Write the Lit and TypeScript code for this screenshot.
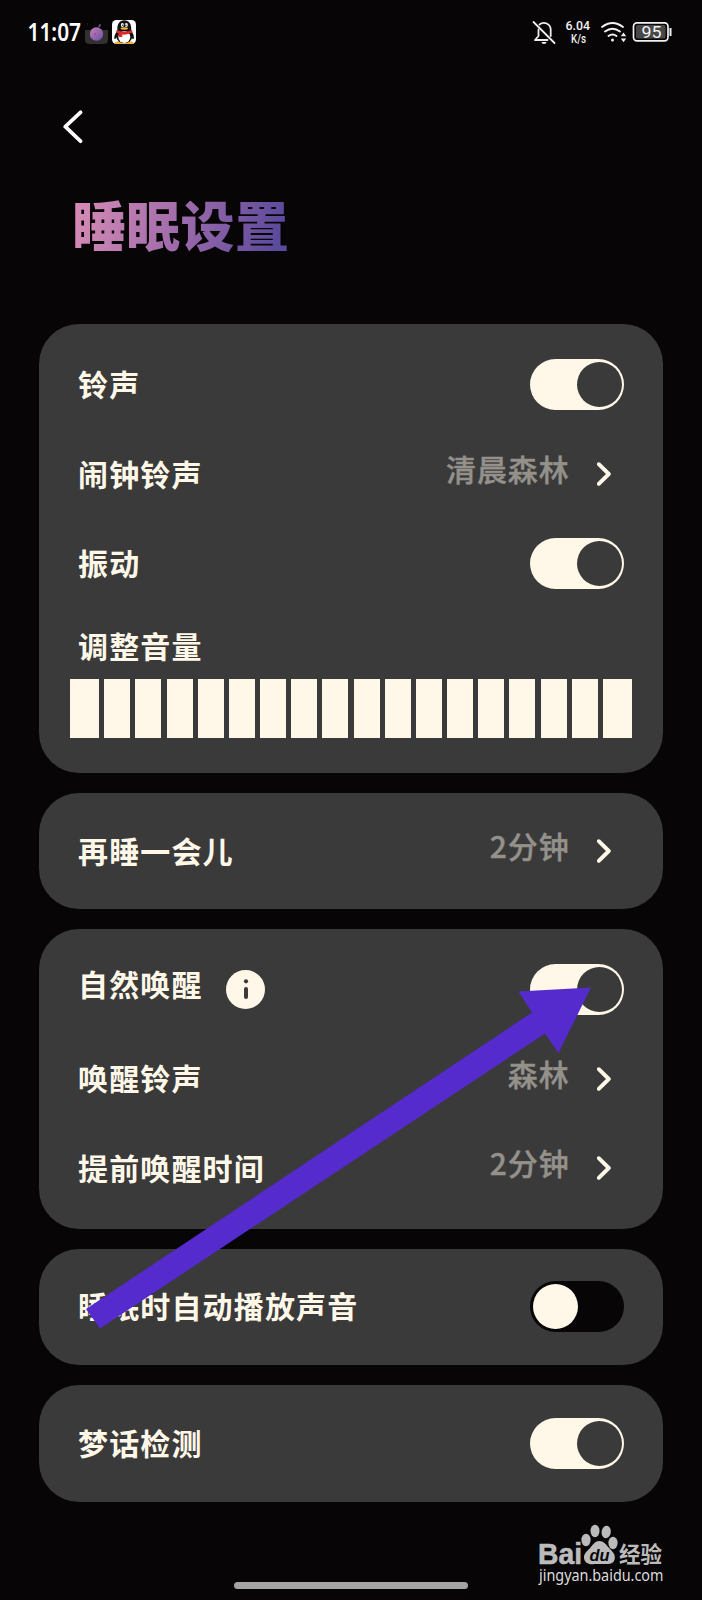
import { LitElement, html, css, nothing } from "lit";
import { customElement, property } from "lit/decorators.js";

@customElement("toggle-switch")
class ToggleSwitch extends LitElement {
  @property({ type: Boolean, reflect: true }) on = false;
  static styles = css`
    :host {
      display: flex;
      box-sizing: border-box;
      width: 94px;
      height: 51px;
      padding: 3px 2.5px;
      border-radius: 25.5px;
      background: #070506;
      justify-content: flex-start;
    }
    :host([on]) {
      background: #fff8e9;
      justify-content: flex-end;
    }
    .knob {
      width: 45px;
      height: 45px;
      border-radius: 50%;
      background: #fff8e9;
    }
    :host([on]) .knob {
      background: #3a3a3a;
    }
  `;
  render() {
    return html`<div class="knob"></div>`;
  }
}

@customElement("setting-row")
class SettingRow extends LitElement {
  @property() label = "";
  @property() value = "";
  @property() toggle = "";
  @property({ type: Boolean }) info = false;
  static styles = css`
    :host {
      display: flex;
      align-items: center;
      height: 89.5px;
      padding: 0 39px;
    }
    .label {
      font-weight: 700;
      color: #fff8e9;
      margin-top: -3px;
      letter-spacing: 1.15px;
    }
    .label.raised {
      margin-top: -13px;
    }
    .info {
      display: block;
      margin-left: 23.5px;
    }
    .end {
      margin-left: auto;
      display: flex;
      align-items: center;
    }
    .value {
      font-weight: 500;
      color: #94918b;
      margin: -12.5px 27.5px 0 0;
      -webkit-text-stroke: 0.4px #94918b;
    }
    .chevron {
      display: block;
      margin-right: 13px;
    }
  `;
  render() {
    return html`
      <span class="label ${this.info ? "raised" : ""}">${this.label}</span>
      ${this.info
        ? html`<svg class="info" width="39" height="39" viewBox="0 0 39 39">
            <circle cx="19.5" cy="19.5" r="19.5" fill="#fff8e9" />
            <circle cx="20" cy="11.3" r="2.1" fill="#3a3a3a" />
            <path d="M20 19v8" stroke="#3a3a3a" stroke-width="4" stroke-linecap="round" />
          </svg>`
        : nothing}
      <div class="end">
        ${this.toggle
          ? html`<toggle-switch ?on=${this.toggle === "on"}></toggle-switch>`
          : html`<span class="value">${this.value}</span>
              <svg class="chevron" width="14" height="24" viewBox="0 0 14 24" fill="none">
                <path d="M1.8 2.2L11.8 12L1.8 21.8" stroke="#fff8e9" stroke-width="3.9" stroke-linecap="round" stroke-linejoin="round" />
              </svg>`}
      </div>
    `;
  }
}

@customElement("status-bar")
class StatusBar extends LitElement {
  static styles = css`
    :host {
      display: block;
      height: 64px;
      letter-spacing: 0;
    }
    .bar {
      display: block;
    }
    .cond {
      font-family: "Noto Sans", sans-serif;
      font-weight: 600;
    }
    .tiny {
      font-family: Roboto, sans-serif;
      font-weight: 500;
    }
    .level {
      font-family: Roboto, sans-serif;
      font-weight: 400;
    }
  `;
  render() {
    return html`<svg class="bar" width="702" height="64" viewBox="0 0 702 64" fill="none">
      <text class="cond" x="27.5" y="41" font-size="25" fill="#fff" textLength="53.5" lengthAdjust="spacingAndGlyphs">11:07</text>
      <defs>
        <linearGradient id="plum" x1="0" y1="0" x2="1" y2="1">
          <stop offset="0" stop-color="#c481bb" />
          <stop offset="1" stop-color="#6e4fa0" />
        </linearGradient>
        <clipPath id="tile"><rect x="112" y="20" width="24" height="24" rx="4.5" /></clipPath>
      </defs>
      <path d="M85 30H108V39.500Q108 44 103.500 44H89.500Q85 44 85 39.500Z" fill="#323132" />
      <circle cx="96.500" cy="34" r="6.700" fill="url(#plum)" />
      <circle cx="95" cy="34" r=".7" fill="#74306f" />
      <path d="M98 27.500l1-3 2-.5-1 3z" fill="#5f5b9c" />
      <circle cx="87.500" cy="24" r=".7" fill="#38263e" />
      <circle cx="96" cy="22" r=".6" fill="#38263e" />
      <g clip-path="url(#tile)">
        <rect x="112" y="20" width="24" height="24" fill="#fff" />
        <ellipse cx="119.300" cy="43" rx="4.500" ry="1.800" fill="#efb336" />
        <ellipse cx="129.200" cy="43" rx="4.500" ry="1.800" fill="#efb336" />
        <path d="M118 30C115.500 32.500 113.700 37 114.500 39C115.500 39.300 116.300 38 117 37L131 37C132 38.500 133 39.300 133.700 38.700C134.500 36 132.500 32 130.500 30Z" fill="#111" />
        <ellipse cx="124.300" cy="36" rx="8" ry="7.300" fill="#111" />
        <ellipse cx="124.300" cy="37" rx="6" ry="6" fill="#fff" />
        <path d="M117.300 30.500C117 24 119.500 20.300 124.300 20.300S131.500 24 131.200 30.500Z" fill="#111" />
        <ellipse cx="122.400" cy="25" rx="1.500" ry="2.100" fill="#fff" />
        <ellipse cx="126.300" cy="25" rx="1.500" ry="2.100" fill="#fff" />
        <circle cx="122.800" cy="25.200" r=".7" fill="#111" />
        <circle cx="125.900" cy="25.200" r=".7" fill="#111" />
        <ellipse cx="124.300" cy="28.500" rx="3.700" ry="1.200" fill="#efb336" />
        <path d="M116.500 30Q124 33 132 30L132.500 32.500Q127 35.200 122.300 34.500V37H119V33.800L116.300 32.500Z" fill="#df2929" />
      </g>
      <g stroke="#eee" stroke-width="1.800" stroke-linecap="round" stroke-linejoin="round">
        <path d="M533.500 22L554.500 43" />
        <path d="M538.500 29.500V36L535 40H547.500M539.500 24.500C544 20.700 550.500 24 550.700 29.500V36" />
      </g>
      <path d="M541.500 42h5a2.500 2 0 0 1-5 0z" fill="#eee" />
      <text class="tiny" x="565.500" y="30" font-size="13" fill="#f2f2f2" textLength="24.500" lengthAdjust="spacingAndGlyphs">6.04</text>
      <text class="tiny" x="571" y="43.300" font-size="12" fill="#f2f2f2" textLength="15" lengthAdjust="spacingAndGlyphs">K/s</text>
      <g stroke="#f2f2f2" stroke-width="1.900" stroke-linecap="round">
        <path d="M602 27Q612.500 19 623 27" />
        <path d="M605 31.500Q612.500 26 620 31.500" />
        <path d="M608.500 36Q612.500 33 616.500 36" />
      </g>
      <circle cx="612.500" cy="40" r="1.500" fill="#f2f2f2" />
      <path d="M620.800 36.300L623.500 32.500L626.200 36.300ZM620.800 38.500L623.500 42.300L626.200 38.500Z" fill="#f2f2f2" />
      <rect x="633.500" y="22.800" width="34.500" height="18" rx="3.500" stroke="#f2f2f2" stroke-width="1.700" />
      <rect x="636" y="25" width="29.500" height="13.600" rx="1.500" fill="#484848" />
      <path d="M669.500 28h2v8h-2z" fill="#f2f2f2" />
      <text class="level" x="641.500" y="38" font-size="17" fill="#f2f2f2" textLength="20" lengthAdjust="spacingAndGlyphs">95</text>
    </svg>`;
  }
}

@customElement("app-root")
class AppRoot extends LitElement {
  static styles = css`
    :host {
      display: block;
      position: relative;
      box-sizing: border-box;
      width: 702px;
      height: 1600px;
      overflow: hidden;
      background: #070506;
      font-family: "Noto Sans CJK SC", sans-serif;
      font-size: 30px;
      letter-spacing: 0.85px;
      line-height: 40px;
      white-space: nowrap;
    }
    .screen {
      display: flex;
      flex-direction: column;
      height: 1600px;
    }
    .back {
      display: block;
      margin: 46px 0 0 62px;
    }
    .title {
      width: fit-content;
      margin: 40px 0 0 72px;
      font-size: 54px;
      line-height: 80px;
      font-weight: 900;
      letter-spacing: 0.3px;
      color: transparent;
      background: linear-gradient(105deg, #d78bb5 4%, #a56fac 45%, #5c4a9c 92%);
      -webkit-background-clip: text;
      background-clip: text;
    }
    .cards {
      display: flex;
      flex-direction: column;
      gap: 19.6px;
      margin: 60.200px 39px 0;
    }
    .card {
      box-sizing: border-box;
      border-radius: 40px;
      background: #3a3a3a;
      padding: 15.7px 0;
    }
    .single {
      padding: 13.7px 0;
    }
    .main {
      height: 448.800px;
    }
    .volume {
      padding: 16.800px 39px 0;
      font-weight: 700;
      letter-spacing: 1.15px;
      color: #fff8e9;
    }
    .meter {
      display: flex;
      justify-content: space-between;
      height: 59px;
      margin: 13.800px 31px 0;
    }
    .bar {
      width: 26px;
      background: #fff8e9;
    }
    .bar:first-child,
    .bar:last-child {
      width: 29px;
    }
    .home {
      width: 234px;
      height: 6.500px;
      border-radius: 3.500px;
      margin: auto auto 11.500px;
      background: #a5a4a5;
    }
    .overlay {
      position: absolute;
      left: 0;
      top: 0;
      letter-spacing: 0;
    }
    .bai {
      font-family: "Liberation Sans", sans-serif;
      font-weight: 700;
    }
    .cn {
      font-family: "Noto Sans CJK SC", sans-serif;
      font-weight: 700;
    }
    .url {
      font-family: "Noto Sans", sans-serif;
    }
  `;
  render() {
    return html`
      <div class="screen">
        <status-bar></status-bar>
        <svg class="back" width="22" height="34" viewBox="0 0 22 34" fill="none">
          <path d="M18.500 2.300L3.300 16.700L18.500 31.200" stroke="#fff" stroke-width="3.700" stroke-linecap="round" stroke-linejoin="round" />
        </svg>
        <div class="title">睡眠设置</div>
        <div class="cards">
          <div class="card main">
            <setting-row label="铃声" toggle="on"></setting-row>
            <setting-row label="闹钟铃声" value="清晨森林"></setting-row>
            <setting-row label="振动" toggle="on"></setting-row>
            <div class="volume">调整音量</div>
            <div class="meter">${Array.from({ length: 18 }, () => html`<div class="bar"></div>`)}</div>
          </div>
          <div class="card single"><setting-row label="再睡一会儿" value="2分钟"></setting-row></div>
          <div class="card">
            <setting-row label="自然唤醒" toggle="on" info></setting-row>
            <setting-row label="唤醒铃声" value="森林"></setting-row>
            <setting-row label="提前唤醒时间" value="2分钟"></setting-row>
          </div>
          <div class="card single"><setting-row label="睡眠时自动播放声音" toggle="off"></setting-row></div>
          <div class="card single"><setting-row label="梦话检测" toggle="on"></setting-row></div>
        </div>
        <div class="home"></div>
      </div>
      <svg class="overlay" width="702" height="1600" viewBox="0 0 702 1600">
        <path d="M591 987.500L518.500 991.500L532 1012.500L86 1309L100 1328.500L545 1033.500L558.500 1053Z" fill="#552bcd" />
        <g fill="#bcbbbc">
          <text class="bai" x="538" y="1563.500" font-size="29" textLength="44" lengthAdjust="spacingAndGlyphs" stroke="#bcbbbc" stroke-width=".6">Bai</text>
          <ellipse cx="586" cy="1540" rx="4.600" ry="6.200" />
          <ellipse cx="595" cy="1531" rx="4.500" ry="6.200" />
          <ellipse cx="606.200" cy="1532" rx="4.600" ry="6.200" transform="rotate(8 606.200 1532)" />
          <ellipse cx="613" cy="1543" rx="4.600" ry="6.200" />
          <path d="M599.500 1541C604 1541 606.500 1545 609 1548C612.500 1551.500 615.300 1554 614.800 1558.500C614 1563.500 609.500 1564.500 605 1564H594.500C589 1565 584.500 1563 584 1558C583.700 1553 587.500 1551 590.500 1547.500C593 1544.500 595 1541 599.500 1541Z" />
          <text class="cn" x="619" y="1561.500" font-size="21.500" textLength="43" lengthAdjust="spacingAndGlyphs">经验</text>
          <text class="url" x="539" y="1580.500" font-size="15.500" fill="#dcdcdc" textLength="124.500" lengthAdjust="spacingAndGlyphs">jingyan.baidu.com</text>
        </g>
        <text class="bai" x="589.500" y="1561" font-size="17" font-style="italic" fill="#070506" textLength="20" lengthAdjust="spacingAndGlyphs">du</text>
      </svg>
    `;
  }
}
